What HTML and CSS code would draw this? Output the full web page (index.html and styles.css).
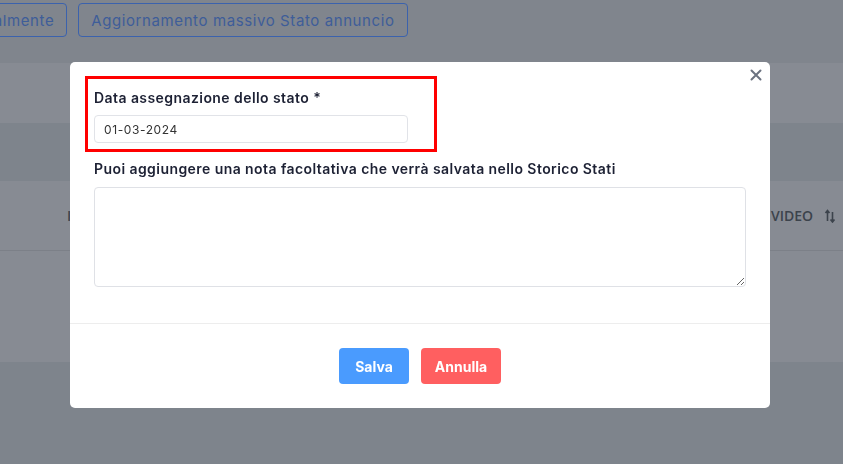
FILE: index.html
```html
<!DOCTYPE html>
<html lang="it">
<head>
    <meta charset="UTF-8">
    <meta name="viewport" content="width=device-width, initial-scale=1.0">
    <title>Aggiornamento Stato annuncio</title>
    <link rel="stylesheet" href="styles.css">
</head>
<body>
    <div class="page">
        <div class="toolbar">
            <button class="btn-outline">Aggiorna globalmente</button>
            <button class="btn-outline">Aggiornamento massivo Stato annuncio</button>
        </div>
        <div class="band band-light"></div>
        <div class="band band-dark"></div>
        <div class="table-head">
            <span class="th th-first">ID</span>
            <span class="th th-video">VIDEO
                <svg class="sort" width="12" height="14" viewBox="0 0 12 14">
                    <path d="M3.5 12V2M1.5 4l2-2.5 2 2.5" fill="none" stroke="#3c434c" stroke-width="1.6"/>
                    <path d="M8.5 3v10M6.5 10.5l2 2.5 2-2.5" fill="none" stroke="#3c434c" stroke-width="1.6"/>
                </svg>
            </span>
        </div>
        <div class="band band-row"></div>
        <div class="band band-dark band-fill"></div>
    </div>

    <div class="modal">
        <button class="close" aria-label="Chiudi">
            <svg width="12" height="12" viewBox="0 0 12 12">
                <path d="M1.5 1.5l9 9M10.5 1.5l-9 9" stroke="#6b7280" stroke-width="2" stroke-linecap="round"/>
            </svg>
        </button>
        <div class="modal-body">
            <div class="field field-marked">
                <label for="data">Data assegnazione dello stato *</label>
                <input type="text" id="data" class="input-date" value="01-03-2024">
            </div>
            <div class="field field-note">
                <label for="nota">Puoi aggiungere una nota facoltativa che verrà salvata nello Storico Stati</label>
                <textarea id="nota"></textarea>
            </div>
        </div>
        <div class="modal-footer">
            <button class="btn btn-save">Salva</button>
            <button class="btn btn-cancel">Annulla</button>
        </div>
    </div>
</body>
</html>
```

FILE: styles.css
```css
* {
    box-sizing: border-box;
}
body {
    margin: 0;
    font-family: Inter, "Noto Sans", sans-serif;
    background-color: #7f848c;
    height: 464px;
    overflow: hidden;
}
.page {
    display: flex;
    flex-direction: column;
    height: 464px;
}
.toolbar {
    height: 63px;
    display: flex;
    gap: 11px;
    padding-top: 3px;
    margin-left: -127px;
    background-color: #80858d;
}
.btn-outline {
    height: 34px;
    padding: 0 12px;
    border: 1px solid #3b62ad;
    border-radius: 4px;
    background: transparent;
    color: #3e5d99;
    font-family: inherit;
    font-size: 15px;
    letter-spacing: 0.6px;
}
.band {
    height: 60px;
}
.band-light {
    background-color: #878b93;
}
.band-dark {
    height: 58px;
    background-color: #7e848c;
}
.band-row {
    height: 111px;
    background-color: #878b93;
}
.band-fill {
    flex: 1;
}
.table-head {
    height: 70px;
    display: flex;
    align-items: center;
    justify-content: space-between;
    background-color: #878b93;
    border-bottom: 1px solid #7c8088;
    padding: 0 7px 0 67px;
    font-family: "Open Sans", sans-serif;
    font-weight: 600;
    font-size: 14px;
    color: #3c434c;
}
.th-video {
    display: flex;
    align-items: center;
    gap: 11px;
}

.modal {
    position: fixed;
    left: 70px;
    top: 62px;
    width: 700px;
    height: 346px;
    background: #fff;
    border-radius: 5px;
}
.close {
    position: absolute;
    right: 8px;
    top: 7px;
    border: none;
    background: none;
    padding: 0;
    width: 12px;
    height: 12px;
    line-height: 0;
}
.modal-body {
    padding: 23px 24px 36px;
    border-bottom: 1px solid #ededed;
}
.field label {
    display: block;
    font-size: 14px;
    line-height: 21px;
    font-weight: 600;
    letter-spacing: 0.43px;
    color: #1d2134;
    padding-top: 2px;
    margin-bottom: 7px;
}
.field-marked {
    width: 334px;
    outline: 3px solid #ff0000;
    outline-offset: 6px;
}
.input-date {
    display: block;
    width: 314px;
    height: 28px;
    border: 1px solid #e1e3e8;
    border-radius: 4px;
    padding: 0 9px;
    font-family: inherit;
    font-size: 12px;
    letter-spacing: 0.6px;
    color: #333;
}
.field-note {
    margin-top: 13px;
}
.field-note label {
    margin-bottom: 8px;
}
.field-note textarea {
    display: block;
    width: 652px;
    height: 100px;
    border: 1px solid #dfe1e6;
    border-radius: 4px;
}
.modal-footer {
    display: flex;
    justify-content: center;
    gap: 12px;
    padding-top: 24px;
}
.btn {
    height: 36px;
    border: none;
    border-radius: 4px;
    color: #fff;
    font-family: inherit;
    font-weight: 700;
    font-size: 14px;
}
.btn-save {
    width: 70px;
    background-color: #4a9bfe;
}
.btn-cancel {
    width: 80px;
    background-color: #ff5f60;
}
```
